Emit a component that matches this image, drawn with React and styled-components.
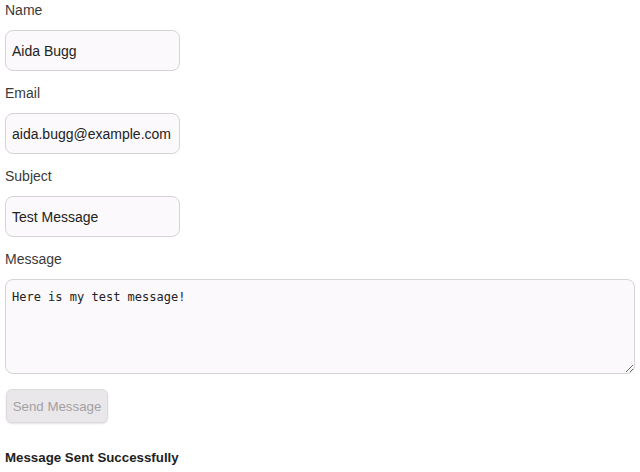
import { useState } from "react";
import styled, { createGlobalStyle } from "styled-components";

const GlobalStyle = createGlobalStyle`
  html, body {
    margin: 0;
    padding: 0;
    background: #ffffff;
  }
  body {
    font-family: "Liberation Sans", Arial, sans-serif;
    color: #333333;
  }
`;

const Form = styled.form`
  display: flex;
  flex-direction: column;
  align-items: flex-start;
  padding: 1px 5px 0;
`;

const Label = styled.label`
  display: block;
  font-size: 14px;
  line-height: 18px;
  color: #3a3a3a;
  margin-bottom: 11px;
`;

const Input = styled.input`
  box-sizing: border-box;
  width: 175px;
  height: 41px;
  margin: 0 0 13px;
  padding: 0 6px;
  border: 1px solid #d6d3d6;
  border-radius: 8px;
  background: #fbf9fb;
  font-family: "Liberation Sans", Arial, sans-serif;
  font-size: 14px;
  color: #222222;
  outline: none;
`;

const TextArea = styled.textarea`
  box-sizing: border-box;
  width: 630px;
  height: 95px;
  margin: 0 0 15px;
  padding: 9px 6px;
  border: 1px solid #d6d3d6;
  border-radius: 8px;
  background: #fbf9fb;
  font-family: "DejaVu Sans Mono", monospace;
  font-size: 12px;
  line-height: 16px;
  color: #222222;
  outline: none;
`;

const Button = styled.button`
  box-sizing: border-box;
  width: 102px;
  height: 34px;
  margin-left: 1px;
  padding: 0;
  border: 1px solid #dcdadc;
  border-radius: 6px;
  background: #e9e7e9;
  box-shadow: 0 1px 2px rgba(0, 0, 0, 0.12);
  font-family: "Liberation Sans", Arial, sans-serif;
  font-size: 13.3px;
  color: #a3a1a3;
`;

const Status = styled.p`
  margin: 26px 0 0;
  font-size: 13.3px;
  line-height: 18px;
  font-weight: bold;
  color: #222222;
`;

const App = () => {
  const [name, setName] = useState("Aida Bugg");
  const [email, setEmail] = useState("aida.bugg@example.com");
  const [subject, setSubject] = useState("Test Message");
  const [message, setMessage] = useState("Here is my test message!");

  return (
    <>
      <GlobalStyle />
      <Form onSubmit={(e) => e.preventDefault()}>
        <Label htmlFor="name">Name</Label>
        <Input id="name" value={name} onChange={(e) => setName(e.target.value)} />
        <Label htmlFor="email">Email</Label>
        <Input id="email" value={email} onChange={(e) => setEmail(e.target.value)} />
        <Label htmlFor="subject">Subject</Label>
        <Input id="subject" value={subject} onChange={(e) => setSubject(e.target.value)} />
        <Label htmlFor="message">Message</Label>
        <TextArea id="message" value={message} onChange={(e) => setMessage(e.target.value)} />
        <Button type="submit" disabled>
          Send Message
        </Button>
        <Status>Message Sent Successfully</Status>
      </Form>
    </>
  );
};

export default App;
